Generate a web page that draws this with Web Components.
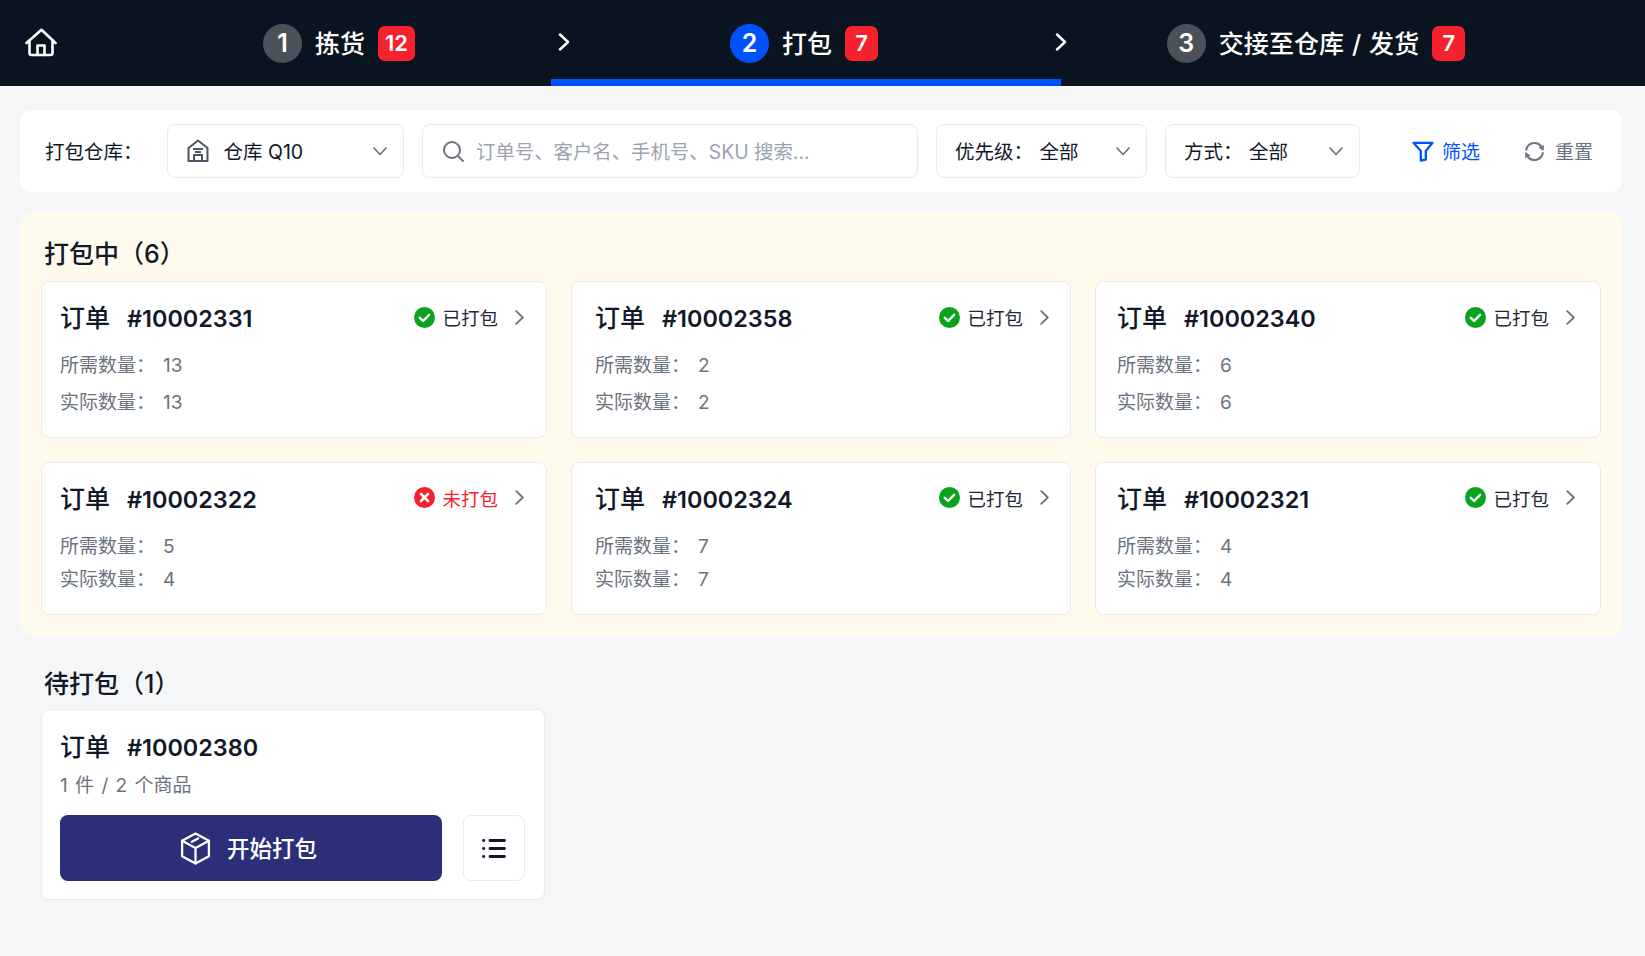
<!DOCTYPE html>
<html lang="zh">
<head>
<meta charset="utf-8">
<title>打包</title>
<style>
  html, body { margin: 0; background: #f5f6f8; }
  body { font-family: Inter, "Noto Sans CJK SC", sans-serif; color: #111827; }
</style>
</head>
<body>
<pack-app></pack-app>
<script>
const chevronDown = `<svg width="16" height="16" viewBox="0 0 16 16" fill="none" stroke="#6b7280" stroke-width="1.7" stroke-linecap="round" stroke-linejoin="round"><path d="M2 5l6 6.5L14 5"/></svg>`;

class NavStep extends HTMLElement {
    constructor() {
        super();
        this.attachShadow({ mode: 'open' });
        const n = this.getAttribute('n');
        const count = this.getAttribute('count');
        this.shadowRoot.innerHTML = `
            <style>
                :host {
                    align-items: center;
                    box-sizing: border-box;
                    color: #fff;
                    display: flex;
                    gap: 13px;
                    height: 86px;
                    justify-content: center;
                }
                :host([active]) { box-shadow: inset 0 -7px 0 #0052ff; padding-right: 4px; }
                #num {
                    align-items: center;
                    background: #4b5159;
                    border-radius: 50%;
                    display: flex;
                    font-size: 25px;
                    font-weight: 600;
                    height: 39px;
                    justify-content: center;
                    width: 39px;
                }
                :host([active]) #num { background: #0052ff; }
                #label { font-size: 25px; font-weight: 500; padding-bottom: 2px; white-space: nowrap; }
                :host([n="3"]) #label { word-spacing: 1px; letter-spacing: 0.1px; }
                #badge {
                    align-items: center;
                    background: #f5222d;
                    border-radius: 7px;
                    display: flex;
                    font-size: 22px;
                    font-weight: 600;
                    height: 35px;
                    justify-content: center;
                    min-width: 33px;
                    padding: 0 3px;
                    box-sizing: border-box;
                }
                :host([n="1"]) #badge { min-width: 37px; }
            </style>
            <div id="num">${n}</div>
            <div id="label"><slot></slot></div>
            <div id="badge">${count}</div>
        `;
    }
}
customElements.define('nav-step', NavStep);

class TopNav extends HTMLElement {
    constructor() {
        super();
        this.attachShadow({ mode: 'open' });
        const chevron = `<svg width="12" height="18" viewBox="0 0 12 18" fill="none" stroke="#fff" stroke-width="2.4" stroke-linecap="round" stroke-linejoin="round"><path d="M2 1.5L10 9l-8 7.5"/></svg>`;
        this.shadowRoot.innerHTML = `
            <style>
                :host {
                    align-items: center;
                    background: #0a1420;
                    display: flex;
                    height: 86px;
                }
                #home { box-sizing: border-box; display: flex; padding-left: 25px; width: 127px; }
                ::slotted(nav-step) { flex: none; }
                .sep { display: flex; flex: none; margin-bottom: 3px; position: relative; z-index: 1; }
                #sep1 { margin-left: 7px; margin-right: -19px; }
                #sep2 { margin-left: -6px; margin-right: -6px; }
                ::slotted([n="1"]) { width: 424px; }
                ::slotted([n="2"]) { width: 510px; }
                ::slotted([n="3"]) { width: 510px; }
            </style>
            <div id="home">
                <svg width="32" height="30" viewBox="0 0 32 30" fill="none" stroke="#fff" stroke-width="2.6" stroke-linecap="round" stroke-linejoin="round">
                    <path d="M1.5 15L16.5 1.8 30.5 15"/>
                    <path d="M4.5 12.5v12.5a2 2 0 0 0 2 2h19a2 2 0 0 0 2-2V12.5"/>
                    <path d="M12.5 27V17.5h7V27"/>
                </svg>
            </div>
            <slot name="s1"></slot>
            <div class="sep" id="sep1">${chevron}</div>
            <slot name="s2"></slot>
            <div class="sep" id="sep2">${chevron}</div>
            <slot name="s3"></slot>
        `;
    }
}
customElements.define('top-nav', TopNav);

class PickBox extends HTMLElement {
    constructor() {
        super();
        this.attachShadow({ mode: 'open' });
        this.shadowRoot.innerHTML = `
            <style>
                :host {
                    align-items: center;
                    background: #fff;
                    border: 1px solid #e8eaee;
                    border-radius: 8px;
                    box-sizing: border-box;
                    display: flex;
                    flex: none;
                    font-size: 19.5px;
                    height: 54px;
                    justify-content: space-between;
                    padding: 0 15.5px 0 18px;
                }
                #main { align-items: center; display: flex; gap: 6.5px; padding-bottom: 2px; white-space: nowrap; }
            </style>
            <div id="main"><slot></slot></div>
            ${chevronDown}
        `;
    }
}
customElements.define('pick-box', PickBox);

class SearchBox extends HTMLElement {
    constructor() {
        super();
        this.attachShadow({ mode: 'open' });
        this.shadowRoot.innerHTML = `
            <style>
                :host {
                    align-items: center;
                    background: #fff;
                    border: 1px solid #e8eaee;
                    border-radius: 8px;
                    box-sizing: border-box;
                    color: #9ca3af;
                    display: flex;
                    flex: none;
                    font-size: 19.4px;
                    gap: 11px;
                    height: 54px;
                    padding-left: 19px;
                    white-space: nowrap;
                }
                #ph { padding-bottom: 2px; }
            </style>
            <svg width="23" height="23" viewBox="0 0 23 23" fill="none" stroke="#6b7280" stroke-width="2" stroke-linecap="round"><circle cx="10" cy="10" r="8"/><path d="M16 16l5 5"/></svg>
            <div id="ph"><slot></slot></div>
        `;
    }
}
customElements.define('search-box', SearchBox);

class FilterBar extends HTMLElement {
    constructor() {
        super();
        this.attachShadow({ mode: 'open' });
        this.shadowRoot.innerHTML = `
            <style>
                :host {
                    align-items: center;
                    background: #fff;
                    border-radius: 10px;
                    box-sizing: border-box;
                    display: flex;
                    font-size: 19px;
                    height: 82px;
                    padding-left: 25px;
                }
                #label { flex: none; font-size: 19.5px; padding-bottom: 2px; width: 122px; white-space: nowrap; }
                #wh { padding-left: 19px; width: 237px; }
                #search { margin-left: 18px; width: 496px; }
                #prio { margin-left: 18px; width: 211px; }
                #way { margin-left: 18px; width: 195px; padding-right: 15px; }
                .act { align-items: center; display: flex; flex: none; gap: 8px; white-space: nowrap; }
                .act span { padding-bottom: 2px; }
                #filter { color: #0052ff; margin-left: 52px; }
                #reset { color: #6b7280; margin-left: 44px; gap: 10px; }
            </style>
            <div id="label">打包仓库：</div>
            <pick-box id="wh">
                <svg width="22" height="23" viewBox="0 0 22 23" fill="none" stroke="#4b5563" stroke-width="2" stroke-linejoin="round" style="margin-right:8px">
                    <path d="M1.5 9L11 1.5 20.5 9v13h-19z"/>
                    <path d="M6 10h10M8 13h6M7 22v-6h8v6"/>
                </svg>
                <span>仓库 Q10</span>
            </pick-box>
            <search-box id="search">订单号、客户名、手机号、SKU 搜索...</search-box>
            <pick-box id="prio"><span>优先级：</span><span>全部</span></pick-box>
            <pick-box id="way"><span>方式：</span><span>全部</span></pick-box>
            <div class="act" id="filter">
                <svg width="22" height="21" viewBox="0 0 22 21" fill="none" stroke="#0052ff" stroke-width="2.3" stroke-linejoin="round"><path d="M1.5 1.8h19L13.8 10v8.7l-5 .8V10z"/></svg>
                <span>筛选</span>
            </div>
            <div class="act" id="reset">
                <svg width="21" height="21" viewBox="0 0 21 21" fill="none" stroke="#6b7280" stroke-width="2" stroke-linecap="round">
                    <path d="M2.2 9A8.5 8.5 0 0 1 17 5"/><path d="M18.8 12A8.5 8.5 0 0 1 4 16"/>
                    <path d="M14.5 6.5L20 4l-.5 6z" fill="#6b7280" stroke="none"/><path d="M6.5 14.5L1 17l.5-6z" fill="#6b7280" stroke="none"/>
                </svg>
                <span>重置</span>
            </div>
        `;
    }
}
customElements.define('filter-bar', FilterBar);

class OrderCard extends HTMLElement {
    constructor() {
        super();
        this.attachShadow({ mode: 'open' });
        const done = this.getAttribute('state') === 'done';
        const icon = done
            ? `<svg width="21" height="21" viewBox="0 0 21 21"><circle cx="10.5" cy="10.5" r="10.5" fill="#0aa31e"/><path d="M5.8 10.8l3.3 3.2 6-6.2" fill="none" stroke="#fff" stroke-width="2.4" stroke-linecap="round" stroke-linejoin="round"/></svg>`
            : `<svg width="21" height="21" viewBox="0 0 21 21"><circle cx="10.5" cy="10.5" r="10.5" fill="#f5222d"/><path d="M7 7l7 7M14 7l-7 7" fill="none" stroke="#fff" stroke-width="2.6" stroke-linecap="round"/></svg>`;
        this.shadowRoot.innerHTML = `
            <style>
                :host {
                    background: #fff;
                    border: 1px solid #e9ebef;
                    border-radius: 8px;
                    box-sizing: border-box;
                    display: block;
                    padding: 19px var(--pad-r, 22px) 0 var(--pad-l, 18px);
                }
                #head { align-items: center; display: flex; justify-content: space-between; }
                #title { align-items: baseline; color: #111827; display: flex; font-size: 25px; font-weight: 500; line-height: 34px; white-space: nowrap; }
                #title span { margin-right: 17px; }
                #title div { font-size: 23.4px; font-weight: 600; }
                #status { align-items: center; display: flex; font-size: 18.5px; margin-top: -3px; }
                #status .t { margin-left: 7px; color: #1f2937; }
                :host([state="todo"]) #status .t { color: #f5222d; }
                #status svg:last-child { margin-left: 17px; }
                #lines { color: #6b7280; display: grid; font-size: 19px; gap: 10.5px; line-height: 26px; margin-top: 17px; }
                :host([compact]) #lines { gap: 6.5px; margin-top: 17.5px; }
                .ln { display: flex; gap: 8px; white-space: nowrap; }
            </style>
            <div id="head">
                <div id="title"><span>订单</span><div><slot></slot></div></div>
                <div id="status">
                    ${icon}<div class="t">${done ? '已打包' : '未打包'}</div>
                    <svg width="9" height="15" viewBox="0 0 9 15" fill="none" stroke="#6b7280" stroke-width="1.8" stroke-linecap="round" stroke-linejoin="round"><path d="M1.2 1.2L7.8 7.5l-6.6 6.3"/></svg>
                </div>
            </div>
            <div id="lines">
                <div class="ln"><span>所需数量：</span><span>${this.getAttribute('need')}</span></div>
                <div class="ln"><span>实际数量：</span><span>${this.getAttribute('actual')}</span></div>
            </div>
        `;
    }
}
customElements.define('order-card', OrderCard);

class PendingCard extends HTMLElement {
    constructor() {
        super();
        this.attachShadow({ mode: 'open' });
        this.shadowRoot.innerHTML = `
            <style>
                :host {
                    background: #fff;
                    border: 1px solid #e9ebef;
                    border-radius: 8px;
                    box-sizing: border-box;
                    display: block;
                    height: 190.5px;
                    padding: 20px 18px 0;
                    width: 504px;
                }
                #title { align-items: baseline; display: flex; font-size: 25px; font-weight: 500; line-height: 34px; white-space: nowrap; }
                #title span { margin-right: 17px; }
                #title div { font-size: 23.4px; font-weight: 600; }
                #sub { color: #6b7280; font-size: 19px; line-height: 26px; margin-top: 8px; white-space: nowrap; word-spacing: 2px; }
                #row { display: flex; gap: 21px; margin-top: 16px; }
                #go {
                    align-items: center;
                    background: #2b2f7a;
                    border-radius: 8px;
                    color: #fff;
                    display: flex;
                    font-size: 22.5px;
                    font-weight: 500;
                    gap: 16px;
                    height: 66px;
                    justify-content: center;
                    padding-right: 5px;
                    box-sizing: border-box;
                    width: 382px;
                }
                #go span { padding-bottom: 3px; }
                #list {
                    align-items: center;
                    border: 1px solid #e9ebef;
                    border-radius: 8px;
                    box-sizing: border-box;
                    display: flex;
                    height: 66px;
                    justify-content: center;
                    width: 62px;
                }
            </style>
            <div id="title"><span>订单</span><div><slot></slot></div></div>
            <div id="sub">1 件 / 2 个商品</div>
            <div id="row">
                <div id="go">
                    <svg width="31" height="33" viewBox="0 0 30 32" fill="none" stroke="#fff" stroke-width="2.2" stroke-linejoin="round" stroke-linecap="round">
                        <path d="M15 1.5L28 8.5v15L15 30.5 2 23.5v-15z"/>
                        <path d="M2 8.5l13 7 13-7M15 15.5v15"/>
                        <path d="M11.5 9.5l6-3.2"/>
                    </svg>
                    <span>开始打包</span>
                </div>
                <div id="list">
                    <svg width="24" height="21" viewBox="0 0 24 21" fill="none" stroke="#111827" stroke-width="2.8" stroke-linecap="round"><path d="M8 2.5h14.5M8 10.5h14.5M8 18.5h14.5M1.5 2.5h.3M1.5 10.5h.3M1.5 18.5h.3"/></svg>
                </div>
            </div>
        `;
    }
}
customElements.define('pending-card', PendingCard);

class SectionTitle extends HTMLElement {
    constructor() {
        super();
        this.attachShadow({ mode: 'open' });
        this.shadowRoot.innerHTML = `
            <style>
                :host { color: #111827; display: block; font-size: 25px; font-weight: 500; line-height: 34px; white-space: nowrap; }
            </style>
            <slot></slot>
        `;
    }
}
customElements.define('section-title', SectionTitle);

class PackApp extends HTMLElement {
    constructor() {
        super();
        this.attachShadow({ mode: 'open' });
        this.shadowRoot.innerHTML = `
            <style>
                :host { display: block; font-family: Inter, "Noto Sans CJK SC", sans-serif; height: 956px; overflow: hidden; }
                main { display: flex; flex-direction: column; padding: 24px 23px 0 20px; }
                #active {
                    background: #fefaec;
                    border-radius: 10px;
                    margin-top: 20px;
                    padding: 25px 20px 21px 21px;
                }
                #active section-title { margin: 0 0 10px 3px; }
                #grid {
                    display: grid;
                    gap: 24px;
                    grid-template-columns: 506px 499.5px 506.5px;
                    grid-template-rows: 156.5px 153.5px;
                }
                #pending { padding: 31px 0 0 21px; }
                #pending section-title { margin: 0 0 8px 3px; }
            </style>
            <top-nav>
                <nav-step slot="s1" n="1" count="12">拣货</nav-step>
                <nav-step slot="s2" n="2" count="7" active>打包</nav-step>
                <nav-step slot="s3" n="3" count="7">交接至仓库 / 发货</nav-step>
            </top-nav>
            <main>
                <filter-bar></filter-bar>
                <div id="active">
                    <section-title>打包中（6）</section-title>
                    <div id="grid">
                        <order-card state="done" need="13" actual="13">#10002331</order-card>
                        <order-card state="done" need="2" actual="2" style="--pad-l:23px;--pad-r:20.5px">#10002358</order-card>
                        <order-card state="done" need="6" actual="6" style="--pad-l:21.5px;--pad-r:25px">#10002340</order-card>
                        <order-card state="todo" need="5" actual="4" compact>#10002322</order-card>
                        <order-card state="done" need="7" actual="7" compact style="--pad-l:23px;--pad-r:20.5px">#10002324</order-card>
                        <order-card state="done" need="4" actual="4" compact style="--pad-l:21.5px;--pad-r:25px">#10002321</order-card>
                    </div>
                </div>
                <div id="pending">
                    <section-title>待打包（1）</section-title>
                    <pending-card>#10002380</pending-card>
                </div>
            </main>
        `;
    }
}
customElements.define('pack-app', PackApp);
</script>
</body>
</html>
